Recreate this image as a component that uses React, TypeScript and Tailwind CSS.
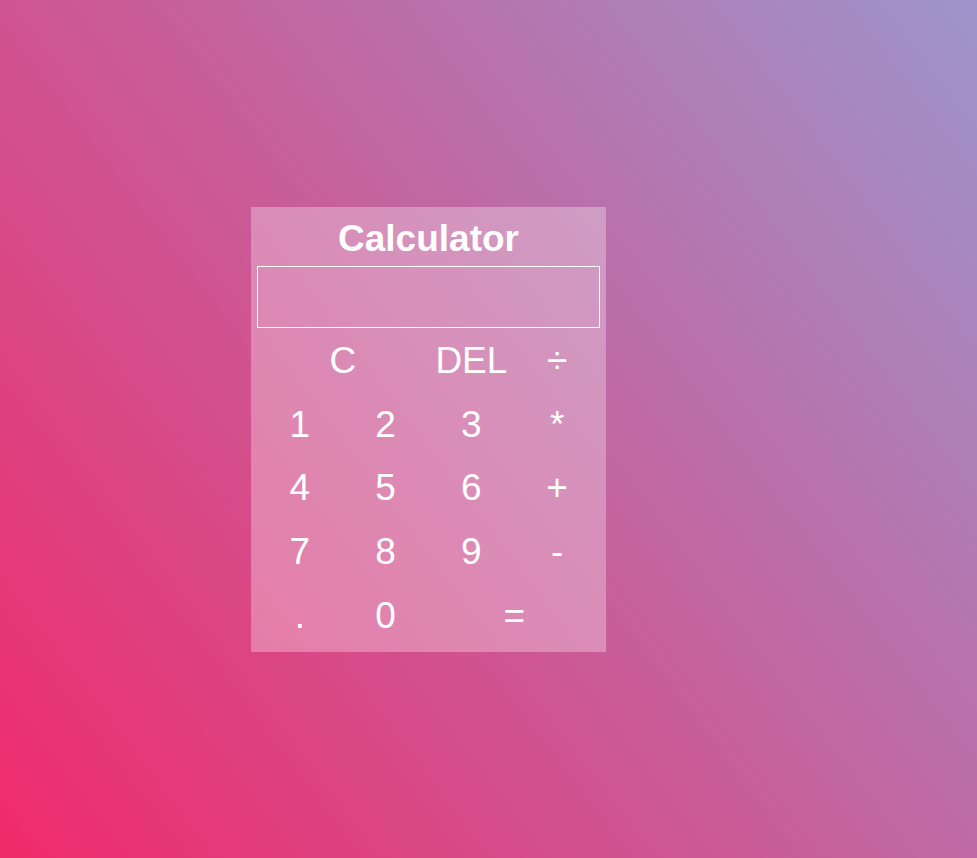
import React from "react";

export default function App() {
  const btn = "flex items-center justify-center text-white text-[37px] leading-none";
  return (
    <div
      className="w-[977px] h-[858px] flex items-start justify-center"
      style={{ fontFamily: '"Liberation Sans", Arial, sans-serif' }}
    >
      <div className="w-full h-full bg-[linear-gradient(53deg,#f02a6b,#9d95cb)] pt-[207px] pl-[251px]">
        <div className="w-[355px] h-[445px] bg-white/30 px-[6px] pt-[6px]">
          <div className="h-[53px] flex items-center justify-center text-white font-bold text-[37px] pb-[2px]">
            Calculator
          </div>
          <div className="h-[62px] border border-white"></div>
          <div className="grid grid-cols-4 auto-rows-[63.6px] mt-px">
            <div className={`${btn} col-span-2`}>C</div>
            <div className={btn}>DEL</div>
            <div className={btn}>÷</div>
            <div className={btn}>1</div>
            <div className={btn}>2</div>
            <div className={btn}>3</div>
            <div className={btn}>*</div>
            <div className={btn}>4</div>
            <div className={btn}>5</div>
            <div className={btn}>6</div>
            <div className={btn}>+</div>
            <div className={btn}>7</div>
            <div className={btn}>8</div>
            <div className={btn}>9</div>
            <div className={btn}>-</div>
            <div className={btn}>.</div>
            <div className={btn}>0</div>
            <div className={`${btn} col-span-2`}>=</div>
          </div>
        </div>
      </div>
    </div>
  );
}
